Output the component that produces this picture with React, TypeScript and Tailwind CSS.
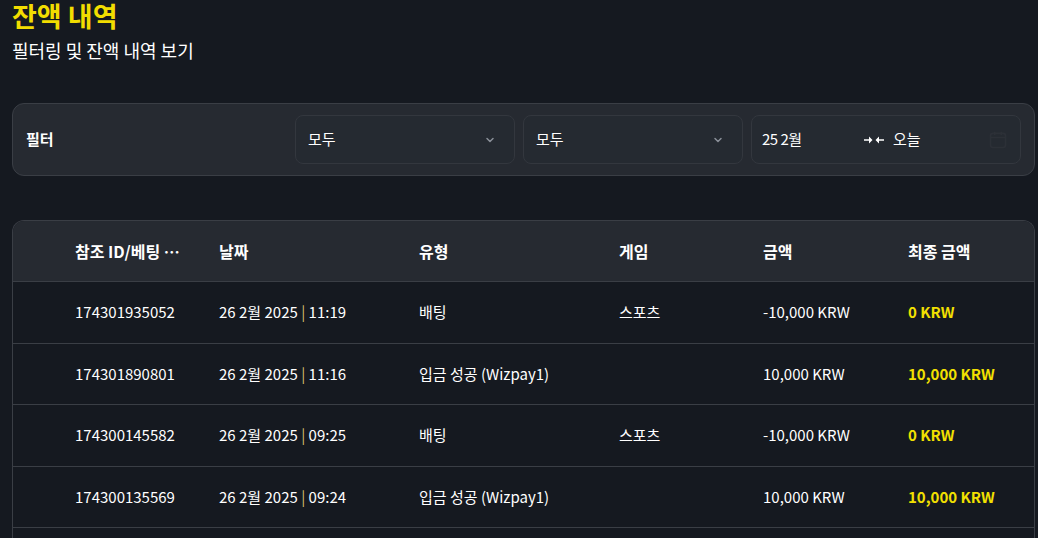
import React from 'react';

const font = { fontFamily: '"Noto Sans CJK KR", "Noto Sans", sans-serif' };

type Row = { id: string; date: string; time: string; type: string; game: string; amount: string; total: string };

const rows: Row[] = [
  { id: '174301935052', date: '26 2월 2025', time: '11:19', type: '배팅', game: '스포츠', amount: '-10,000 KRW', total: '0 KRW' },
  { id: '174301890801', date: '26 2월 2025', time: '11:16', type: '입금 성공 (Wizpay1)', game: '', amount: '10,000 KRW', total: '10,000 KRW' },
  { id: '174300145582', date: '26 2월 2025', time: '09:25', type: '배팅', game: '스포츠', amount: '-10,000 KRW', total: '0 KRW' },
  { id: '174300135569', date: '26 2월 2025', time: '09:24', type: '입금 성공 (Wizpay1)', game: '', amount: '10,000 KRW', total: '10,000 KRW' },
];

const Chevron = () => (
  <svg width="12" height="12" viewBox="0 0 24 24" fill="none" stroke="#8a8f98" strokeWidth="3" strokeLinecap="round" strokeLinejoin="round">
    <path d="M6 9l6 6 6-6" />
  </svg>
);

const Select = () => (
  <div className="flex h-[49px] w-[220px] items-center justify-between rounded-lg border border-[#33373e] bg-[#252a31] pl-[12px] pr-[18px] text-[15px] text-white">
    <span>모두</span>
    <Chevron />
  </div>
);

const cols = 'grid grid-cols-[144px_200px_200px_144px_145px_1fr] pl-[62px]';

const App: React.FC = () => {
  return (
    <div style={font} className="min-h-[538px] w-full overflow-hidden bg-[#151920] pl-3 pr-[3px] text-white">
      <h1 className="pt-[1px] text-[27px] font-bold leading-[30px] text-[#f2dd00]">잔액 내역</h1>
      <p className="mt-[7px] text-[18px] leading-[24px] text-white">필터링 및 잔액 내역 보기</p>

      <div className="mt-[41px] flex h-[73px] items-center rounded-[12px] border border-[#3a3e45] bg-[#262a31] pl-[13px] pr-[12px]">
        <span className="w-[269px] text-[15px] font-bold">필터</span>
        <div className="flex gap-[8px]">
          <Select />
          <Select />
          <div className="flex h-[49px] w-[270px] items-center rounded-lg border border-[#33373e] bg-[#252a31] pl-[10px] pr-[12px] text-[15px]">
            <span className="w-[102px] tracking-[-0.5px]">25 2월</span>
            <svg width="20" height="10" viewBox="0 0 20 10" fill="white">
              <path d="M0 4.2h5v-2.6l3.5 3.4-3.5 3.4v-2.6h-5z" />
              <path d="M20 4.2h-5v-2.6l-3.5 3.4 3.5 3.4v-2.6h5z" />
            </svg>
            <span className="ml-[9px]">오늘</span>
            <svg className="ml-auto" width="20" height="20" viewBox="0 0 24 24" fill="none" stroke="#2c3037" strokeWidth="2">
              <rect x="3" y="4" width="18" height="17" rx="3" />
              <path d="M3 9h18M8 2v4M16 2v4" />
            </svg>
          </div>
        </div>
      </div>

      <div className="mt-[44px] overflow-hidden rounded-t-[12px] border border-b-0 border-[#3a3e45]">
        <div className={`${cols} h-[61px] items-center border-b border-[#3a3e45] bg-[#262a31] text-[16px] font-bold`}>
          <span>참조 ID/베팅 …</span>
          <span>날짜</span>
          <span>유형</span>
          <span>게임</span>
          <span>금액</span>
          <span>최종 금액</span>
        </div>
        {rows.map((r) => (
          <div key={r.id} className={`${cols} h-[61.5px] items-center border-b border-[#3a3e45] bg-[#151920] text-[15px]`}>
            <span>{r.id}</span>
            <span>
              {r.date} <span className="text-[#d8c070]">|</span> {r.time}
            </span>
            <span>{r.type}</span>
            <span>{r.game}</span>
            <span>{r.amount}</span>
            <span className="font-bold text-[#f2e000]">{r.total}</span>
          </div>
        ))}
        <div className="h-[30px] bg-[#151920]" />
      </div>
    </div>
  );
};

export default App;
